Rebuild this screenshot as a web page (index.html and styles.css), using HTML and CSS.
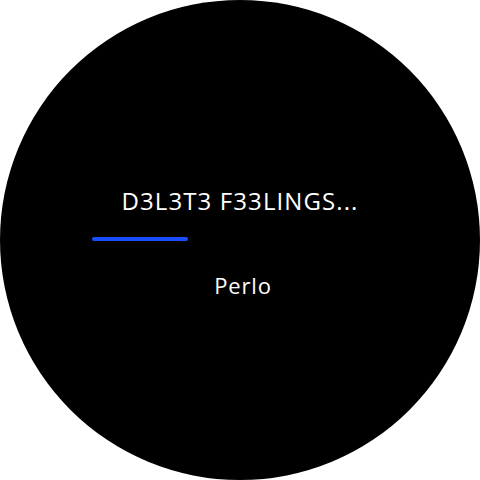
FILE: index.html
```html
<!DOCTYPE html>
<html lang="en">
<head>
    <meta charset="UTF-8">
    <meta name="viewport" content="width=device-width, initial-scale=1.0">
    <title>Deleting</title>
    <link rel="stylesheet" href="styles.css">
</head>
<body>
    <div class="watch">
        <div class="title">D3L3T3 F33LINGS...</div>
        <div class="progress">
            <div class="bar" style="width: 96px"></div>
        </div>
        <div class="name">Perlo</div>
    </div>
</body>
</html>
```

FILE: styles.css
```css
body {
    margin: 0;
    background: #fff;
    font-family: "Open Sans", sans-serif;
}
.watch {
    width: 480px;
    height: 480px;
    border-radius: 50%;
    background: #000;
    color: #fff;
    display: flex;
    flex-direction: column;
    align-items: center;
    padding-top: 185px;
    box-sizing: border-box;
}
.title {
    font-size: 24px;
    line-height: 32px;
    letter-spacing: 1.1px;
}
.progress {
    align-self: stretch;
    padding-left: 92px;
    margin-top: 20px;
}
.bar {
    height: 4px;
    background: #1a4dff;
    border-radius: 2px;
}
.name {
    margin-top: 30px;
    font-size: 22px;
    line-height: 28px;
    letter-spacing: 0.8px;
    padding-left: 6px;
}
```
